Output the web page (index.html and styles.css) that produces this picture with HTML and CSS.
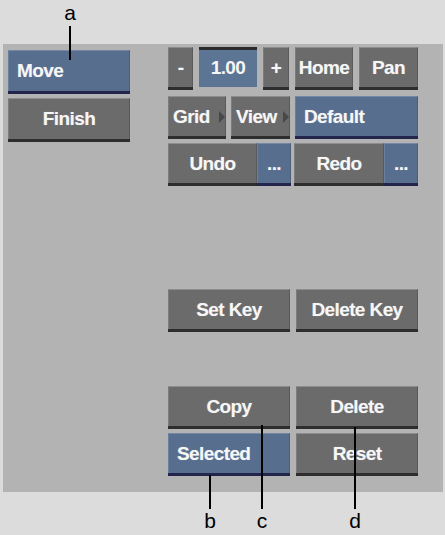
FILE: index.html
```html
<!DOCTYPE html>
<html>
<head>
  <title>Motion Controls</title>
  <link rel="stylesheet" href="styles.css">
</head>
<body>
  <div class="figure">
    <div class="panel">
      <div class="left-col">
        <div class="btn blue left">Move</div>
        <div class="btn finish">Finish</div>
      </div>

      <div class="right-col">
        <div class="row row-zoom">
          <div class="btn w-minus">-</div>
          <div class="field">1.00</div>
          <div class="btn w-plus">+</div>
          <div class="btn w-home">Home</div>
          <div class="btn w-pan">Pan</div>
        </div>

        <div class="row row-view">
          <div class="btn menu w-grid">Grid<span class="arrow"></span></div>
          <div class="btn menu w-view">View<span class="arrow"></span></div>
          <div class="btn blue left w-default">Default</div>
        </div>

        <div class="row row-undo">
          <div class="pair">
            <div class="btn w-undo">Undo</div>
            <div class="btn blue w-dots">...</div>
          </div>
          <div class="pair">
            <div class="btn w-redo">Redo</div>
            <div class="btn blue w-dots">...</div>
          </div>
        </div>

        <div class="row row-key">
          <div class="btn w-half">Set Key</div>
          <div class="btn w-half">Delete Key</div>
        </div>

        <div class="row row-copy">
          <div class="btn w-half">Copy</div>
          <div class="btn w-half">Delete</div>
        </div>

        <div class="row row-reset">
          <div class="btn blue left w-half">Selected</div>
          <div class="btn w-half">Reset</div>
        </div>
      </div>
    </div>

    <!-- callouts -->
    <span class="callout label-a">a</span>
    <span class="leader line-a"></span>
    <span class="callout label-b">b</span>
    <span class="leader line-b"></span>
    <span class="callout label-c">c</span>
    <span class="leader line-c"></span>
    <span class="callout label-d">d</span>
    <span class="leader line-d"></span>
  </div>
</body>
</html>
```

FILE: styles.css
```css
/* Page */
body {
  margin: 0;
  background-color: #dcdcdc;
  font-family: "Liberation Sans", Arial, sans-serif;
}

.figure {
  position: relative;
  width: 445px;
  height: 535px;
  padding-top: 44px;
  box-sizing: border-box;
}

/* Panel */
.panel {
  margin-left: 3px;
  width: 440px;
  height: 448px;
  background-color: #b3b3b3;
  display: grid;
  grid-template-columns: 122px 250px;
  column-gap: 38px;
  padding-left: 5px;
  box-sizing: border-box;
}

.left-col {
  padding-top: 6px;
  display: flex;
  flex-direction: column;
  gap: 7px;
}

.right-col {
  padding-top: 3px;
  display: flex;
  flex-direction: column;
}

.row {
  display: flex;
  justify-content: space-between;
}

.row-view { margin-top: 9px; }
.row-undo { margin-top: 7px; }
.row-key { margin-top: 106px; }
.row-copy { margin-top: 57px; }
.row-reset { margin-top: 7px; }

.pair {
  display: flex;
}

/* Buttons */
.btn {
  position: relative;
  height: 40px;
  box-sizing: border-box;
  background-color: #6b6b6b;
  border-top: 1px solid #8d8d8d;
  border-left: 1px solid #7c7c7c;
  border-right: 1px solid #5a5a5a;
  box-shadow: 0 3px 0 #2e2e2e;
  color: #f6f6f6;
  font-size: 19px;
  font-weight: bold;
  letter-spacing: -0.6px;
  line-height: 40px;
  text-align: center;
  text-shadow: 0 0 1px rgba(255, 255, 255, 0.35);
}

.btn.blue {
  background-color: #576e8e;
  border-top-color: #7589a6;
  border-left-color: #6a7f9c;
  border-right-color: #4b5f7c;
  box-shadow: 0 3px 0 #23254c;
}

.btn.left {
  text-align: left;
  padding-left: 8px;
}

.left-col .btn {
  width: 122px;
  height: 41px;
}

.field {
  width: 58px;
  height: 40px;
  box-sizing: border-box;
  background-color: #5d7594;
  border-top: 3px solid #2a2a2a;
  color: #f6f6f6;
  font-size: 19px;
  font-weight: bold;
  letter-spacing: -0.6px;
  line-height: 36px;
  text-align: center;
}

.w-minus { width: 25px; }
.w-plus { width: 26px; }
.w-home { width: 58px; }
.w-pan { width: 59px; }

.w-grid { width: 58px; }
.w-view { width: 59px; }
.w-default { width: 123px; }

.w-undo { width: 89px; }
.w-redo { width: 90px; }
.w-dots { width: 34px; }

.w-half { width: 122px; }

/* Menu buttons with a small arrow */
.btn.menu {
  text-align: left;
  padding-left: 4px;
}

.arrow {
  position: absolute;
  right: 0;
  top: 14px;
  width: 0;
  height: 0;
  border-top: 6px solid transparent;
  border-bottom: 6px solid transparent;
  border-left: 6px solid #484848;
}

/* Callouts */
.callout {
  position: absolute;
  color: #000;
  font-size: 21px;
  line-height: 21px;
  transform: translateX(-50%);
}

.leader {
  position: absolute;
  width: 2px;
  background-color: #000;
}

.label-a { left: 70px; top: 2px; }
.line-a { left: 69px; top: 26px; height: 34px; }

.label-b { left: 210px; top: 510px; }
.line-b { left: 209px; top: 475px; height: 34px; }

.label-c { left: 262px; top: 510px; }
.line-c { left: 261px; top: 425px; height: 84px; }

.label-d { left: 355px; top: 510px; }
.line-d { left: 354px; top: 427px; height: 82px; }
```
